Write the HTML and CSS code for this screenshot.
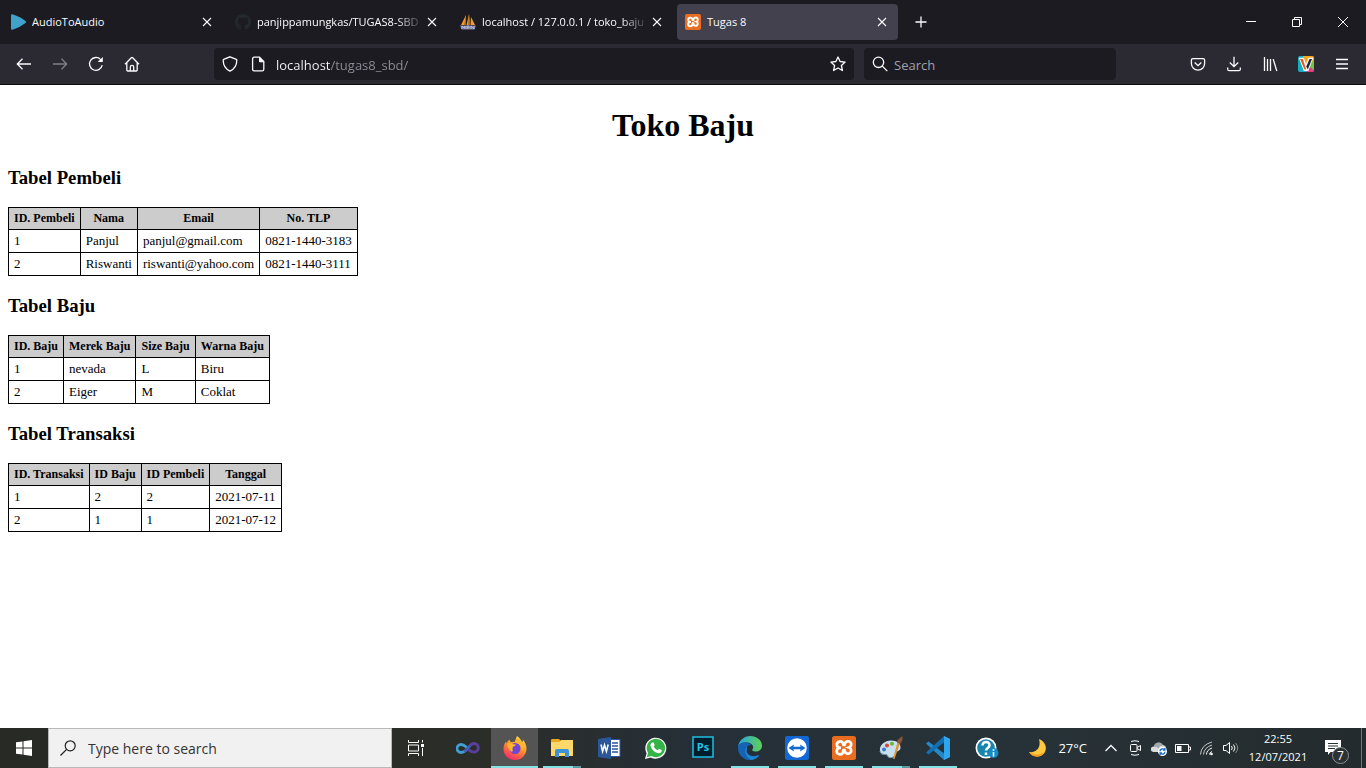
FILE: index.html
```html
<!DOCTYPE html>
<html lang="id">
<head>
<meta charset="utf-8">
<title>Tugas 8</title>
<link rel="stylesheet" href="styles.css">
</head>
<body class="screen">
<header class="browser">
  <div class="tabstrip">
    <div class="tab">
      <svg class="icon16" viewBox="0 0 16 16"><path d="M1 1.500Q1 0 2.500 .3C8 2 12 4.500 15.500 7Q16.500 8 15.500 9C12 11.500 8 14 2.500 15.700Q1 16 1 14.500Z" fill="#3ea2cb"/></svg>
      <span class="tab-title">AudioToAudio</span>
      <button class="tab-close" aria-label="Close tab"><svg class="icon10" viewBox="0 0 10 10"><path d="M1 1l8 8M9 1l-8 8" stroke="#fbfbfe" stroke-width="1.1"/></svg></button>
    </div>
    <div class="tab">
      <svg class="icon16" viewBox="0 0 16 16"><path fill="#24292e" d="M8 0C3.580 0 0 3.580 0 8c0 3.540 2.290 6.530 5.470 7.590.4.070.55-.17.55-.38v-1.490c-2.010.37-2.530-.49-2.690-.94-.09-.23-.48-.94-.82-1.130-.28-.15-.68-.52-.01-.53.63-.01 1.080.58 1.230.82.72 1.210 1.870.87 2.330.66.070-.52.28-.87.51-1.070-1.780-.2-3.640-.89-3.640-3.950 0-.87.310-1.590.82-2.150-.08-.2-.36-1.020.08-2.120 0 0 .67-.21 2.200.82a7.600 7.600 0 0 1 4 0c1.530-1.040 2.200-.82 2.200-.82.44 1.100.16 1.920.08 2.120.51.56.82 1.270.82 2.150 0 3.070-1.870 3.750-3.650 3.950.29.25.54.73.54 1.480v2.200c0 .21.15.46.55.38A8 8 0 0 0 8 0Z"/></svg>
      <span class="tab-title tab-title-long">panjippamungkas/TUGAS8-SBD</span>
      <button class="tab-close" aria-label="Close tab"><svg class="icon10" viewBox="0 0 10 10"><path d="M1 1l8 8M9 1l-8 8" stroke="#fbfbfe" stroke-width="1.1"/></svg></button>
    </div>
    <div class="tab">
      <svg class="icon16" viewBox="0 0 16 16"><path d="M6 1L1 11h4.500ZM9 0L6.500 11H10ZM11 3l-.5 8H15Z" fill="#f39a28"/><path d="M6 1L4 11h1.500ZM9 0L8 11h2Z" fill="#b96610"/><path d="M0 11.500h16l-1.500 4H1.500Z" fill="#77799b"/><path d="M2 15v-3l2 2 1-2v3M7 15v-3h2v2H7M11 15v-3l3 3v-3" stroke="#c9cadf" fill="none" stroke-width=".8"/></svg>
      <span class="tab-title tab-title-long">localhost / 127.0.0.1 / toko_baju</span>
      <button class="tab-close" aria-label="Close tab"><svg class="icon10" viewBox="0 0 10 10"><path d="M1 1l8 8M9 1l-8 8" stroke="#fbfbfe" stroke-width="1.1"/></svg></button>
    </div>
    <div class="tab tab-active">
      <svg class="icon16" viewBox="0 0 24 24"><rect width="24" height="24" rx="2.500" fill="#ea6c1f"/><path d="M9 11.900H8a3.200 3.200 0 1 1 3.100-4.200L11.500 9h1l.4-1.300A3.200 3.200 0 1 1 17 11.500a3.200 3.200 0 1 1-4.100 4L12.500 14h-1l-.4 1.500A3.200 3.200 0 1 1 8 11.900" fill="none" stroke="#fff" stroke-width="2.900"/></svg>
      <span class="tab-title">Tugas 8</span>
      <button class="tab-close" aria-label="Close tab"><svg class="icon10" viewBox="0 0 10 10"><path d="M1 1l8 8M9 1l-8 8" stroke="#fbfbfe" stroke-width="1.1"/></svg></button>
    </div>
    <button class="new-tab" aria-label="New tab"><svg class="icon16" viewBox="0 0 16 16"><path d="M8 2.500v11M2.500 8h11" stroke="#fbfbfe" stroke-width="1.300"/></svg></button>
    <div class="window-controls">
      <button class="window-button" aria-label="Minimize"><svg class="icon10" viewBox="0 0 10 10"><path d="M0 4.500h10" stroke="#fff"/></svg></button>
      <button class="window-button" aria-label="Restore"><svg class="icon10" viewBox="0 0 10 10"><path d="M.5 2.500h7v7h-7zM2.500 2.500v-2h7v7h-2" fill="none" stroke="#fff"/></svg></button>
      <button class="window-button" aria-label="Close"><svg class="icon10" viewBox="0 0 10 10"><path d="M0 0l10 10M10 0L0 10" stroke="#fff"/></svg></button>
    </div>
  </div>
  <nav class="toolbar">
    <button class="tool" aria-label="Back"><svg class="icon16" viewBox="0 0 16 16"><path d="M15 8H1.500M6.500 2.800L1.300 8l5.200 5.200" class="line"/></svg></button>
    <button class="tool tool-disabled" aria-label="Forward"><svg class="icon16" viewBox="0 0 16 16"><path d="M1 8h13.500M9.500 2.800L14.700 8l-5.200 5.200" class="line"/></svg></button>
    <button class="tool" aria-label="Reload"><svg class="icon16" viewBox="0 0 16 16"><path d="M14.200 9.200A6.400 6.400 0 1 1 12.700 3.600L13.700 4.600" class="line"/><path d="M14.800 1v4.600a.5.5 0 0 1-.5.5H9.700z" fill="#fbfbfe"/></svg></button>
    <button class="tool" aria-label="Home"><svg class="icon16" viewBox="0 0 16 16"><path d="M1 8.300L7.300 1.700q.7-.7 1.400 0L15 8.300M2.800 7v7q0 1 1 1h8.400q1 0 1-1V7M6.300 15v-4q0-1.700 1.700-1.700T9.700 11v4" class="line"/></svg></button>
    <div class="spacer"></div>
    <div class="field address">
      <svg class="icon16" viewBox="0 0 16 16"><path d="M8 .8l6.300 2.500q.5.200.5.800C14.800 9 12 13.400 8 15.200 4 13.400 1.200 9 1.200 4.100q0-.6.5-.8Z" class="line"/></svg>
      <svg class="icon16 page-icon" viewBox="0 0 16 16"><path d="M4.200 1.200h5.300l4.300 4.300v7.700q0 1.600-1.600 1.600h-8q-1.600 0-1.600-1.600V2.800q0-1.600 1.600-1.600Z" class="line"/><path d="M9 1v4.500q0 .8.8.8H14Z" fill="#fbfbfe"/></svg>
      <input class="field-input address-input" type="text" value="localhost/tugas8_sbd/" aria-label="Address">
      <button class="field-button" aria-label="Bookmark"><svg class="icon16" viewBox="0 0 16 16"><path d="M8 1l2.100 4.500 5 .6-3.700 3.400 1 5L8 12l-4.400 2.500 1-5L.9 6.100l5-.6Z" class="line" stroke-linejoin="round"/></svg></button>
    </div>
    <div class="field search">
      <svg class="icon16" viewBox="0 0 16 16"><circle cx="6.500" cy="6.300" r="5.200" class="line"/><path d="M10.300 10.100l5 5" class="line"/></svg>
      <input class="field-input" type="search" placeholder="Search" aria-label="Search">
    </div>
    <div class="spacer"></div>
    <button class="tool" aria-label="Pocket"><svg class="icon16" viewBox="0 0 16 16"><path d="M2.800 2.700h10.400q1.400 0 1.400 1.400V7.500a6.600 6.600 0 0 1-13.200 0V4.100q0-1.400 1.400-1.400ZM4.700 6.500L8 9.700l3.300-3.200" class="line"/></svg></button>
    <button class="tool" aria-label="Downloads"><svg class="icon16" viewBox="0 0 16 16"><path d="M8 .8v9.700M3.800 6.500L8 10.700l4.200-4.200M1.700 11.500v1.700q0 1.500 1.500 1.500h9.600q1.500 0 1.500-1.500v-1.700" class="line"/></svg></button>
    <button class="tool" aria-label="Library"><svg class="icon16" viewBox="0 0 16 16"><path d="M2.500 1v14M5.500 3v12M8.500 3v12M11.200 3.100L14.800 15" class="line"/></svg></button>
    <button class="tool" aria-label="Extension"><svg class="icon16" viewBox="0 0 16 16"><rect width="16" height="16" rx="2" fill="#14afc4"/><path d="M5 0h9q2 0 2 2v4L8 9Z" fill="#f8a51b"/><path d="M16 4v10L9 10Z" fill="#7bc242"/><path d="M8 16l4-5 4 4-1 1Z" fill="#e63b7a"/><path d="M.8 1.800h5L8 8l2.500-6.200h4.800L10.300 15H5.800Z" fill="#fff"/><path d="M2 3h2.800L8.200 13.500H6.500Z" fill="#e8561f"/><path d="M11.500 3H14L9.800 13.500 8.300 10.500Z" fill="#1d2440"/></svg></button>
    <button class="tool" aria-label="Menu"><svg class="icon16" viewBox="0 0 16 16"><path d="M2 3.500h12M2 8h12M2 12.500h12" class="line"/></svg></button>
  </nav>
</header>

<main class="page">
  <h1 class="page-title">Toko Baju</h1>

  <h3 class="section-title">Tabel Pembeli</h3>
  <table class="data">
    <thead><tr><th>ID. Pembeli</th><th>Nama</th><th>Email</th><th>No. TLP</th></tr></thead>
    <tbody>
      <tr><td>1</td><td>Panjul</td><td>panjul@gmail.com</td><td>0821-1440-3183</td></tr>
      <tr><td>2</td><td>Riswanti</td><td>riswanti@yahoo.com</td><td>0821-1440-3111</td></tr>
    </tbody>
  </table>

  <h3 class="section-title">Tabel Baju</h3>
  <table class="data">
    <thead><tr><th>ID. Baju</th><th>Merek Baju</th><th>Size Baju</th><th>Warna Baju</th></tr></thead>
    <tbody>
      <tr><td>1</td><td>nevada</td><td>L</td><td>Biru</td></tr>
      <tr><td>2</td><td>Eiger</td><td>M</td><td>Coklat</td></tr>
    </tbody>
  </table>

  <h3 class="section-title">Tabel Transaksi</h3>
  <table class="data">
    <thead><tr><th>ID. Transaksi</th><th>ID Baju</th><th>ID Pembeli</th><th>Tanggal</th></tr></thead>
    <tbody>
      <tr><td>1</td><td>2</td><td>2</td><td>2021-07-11</td></tr>
      <tr><td>2</td><td>1</td><td>1</td><td>2021-07-12</td></tr>
    </tbody>
  </table>
</main>

<footer class="taskbar">
  <button class="start" aria-label="Start"><svg class="icon16" viewBox="0 0 16 16"><path d="M0 2.300L6.500 1.400V7.500H0ZM7.500 1.200L16 0v7.500H7.500ZM0 8.500h6.500v6.100L0 13.700ZM7.500 8.500H16V16l-8.500-1.200Z" fill="#fff"/></svg></button>
  <label class="task-search">
    <svg class="icon16" viewBox="0 0 16 16"><circle cx="10.200" cy="5.800" r="5" fill="none" stroke="#222" stroke-width="1.200"/><path d="M6.600 9.400L.5 15.500" stroke="#222" stroke-width="1.300"/></svg>
    <input class="task-search-input" type="text" placeholder="Type here to search" aria-label="Type here to search">
  </label>
  <button class="task-view" aria-label="Task View"><svg class="icon16" viewBox="0 0 16 16"><path d="M.5 0v2.500h10V0M.5 5h10v6H.5zM.5 16v-2.500h10V16M14.500 0v2.500M14.500 8v8" fill="none" stroke="#fff"/><path d="M13 4h3v3h-3z" fill="#fff"/></svg></button>
  <div class="apps">
    <button class="app" aria-label="Visual Studio"><svg class="icon24" viewBox="0 0 24 24"><path d="M11 13.500C8.500 16 7 16.500 5 16.500a4 4 0 0 1 0-8c3 0 4.500 2 7 4" fill="none" stroke="#3f9fd0" stroke-width="2.800"/><path d="M9 14.800c3.500-1.300 4.500-7.300 9-7.300a4.300 4.300 0 0 1 0 8.600c-3 0-4.500-1.600-7-3.800" fill="none" stroke="#5a3f9c" stroke-width="2.800"/><path d="M8 15.600c2.500-1.200 3.500-3.600 6-6" fill="none" stroke="#3c62b0" stroke-width="2.600"/></svg></button>
    <button class="app app-current" aria-label="Firefox"><svg class="icon24" viewBox="0 0 24 24"><defs><linearGradient id="fx" x1=".8" y1="0" x2=".3" y2="1"><stop offset="0" stop-color="#ffe24a"/><stop offset=".45" stop-color="#ff9726"/><stop offset="1" stop-color="#f5286b"/></linearGradient></defs><path d="M14 0c3 2 4 4 5 6 1-.5 1-1.500.8-2.500C22 6 23.500 9 23.500 12.500A11.400 11.400 0 0 1 12 24C5.500 24 .5 19 .5 13c0-3.500 1-5.500 2.500-7.500l.5 2C4.500 5.500 5 4.500 6.500 3.500c0 1 .5 2 1.500 2.500l4-.3C12.500 3.500 13 2 14 0Z" fill="url(#fx)"/><circle cx="12" cy="12.500" r="5.500" fill="#7146d4"/><path d="M4 8c2-1.500 4-1 5.500-.2 1 .7 2 .7 3.500.7-.5 1.800-2 1.700-3 2.500-1.200 1 .5 3.500-1 5C6 14 4.500 12 4 8ZM12 6.500c5 0 8 4 6.500 8.500 2-1 3-5 1-8L14 2Z" fill="#ffb52f"/></svg></button>
    <button class="app app-open app-stacked" aria-label="File Explorer"><svg class="icon24" viewBox="0 0 24 24"><path d="M1 4q0-1 1-1h7l2 2h11q1 0 1 1v14H1Z" fill="#e9a820"/><path d="M11 4h12v4H8Z" fill="#ffd869"/><path d="M1 6h22v14H1Z" fill="#ffd869"/><path d="M5 21v-6q0-2 2-2h10q2 0 2 2v6h-4v-4H9v4Z" fill="#3b93d8"/></svg></button>
    <button class="app" aria-label="Word"><svg class="icon24" viewBox="0 0 24 24"><path d="M12 3.500h11v17H12Z" fill="#fff" stroke="#2b569a"/><path d="M15 7h6M15 10h6M15 13h6M15 16h6" stroke="#2b569a" stroke-width="1.300"/><path d="M1 3l13-2v22L1 21Z" fill="#2b579a"/><path d="M4 8.500l1.600 7L7.500 9l1.900 6.500 1.800-7" fill="none" stroke="#fff" stroke-width="1.500"/></svg></button>
    <button class="app" aria-label="WhatsApp"><svg class="icon24" viewBox="0 0 24 24"><path d="M1 23l1.600-5.800A10.500 10.500 0 1 1 6.800 21.400Z" fill="#fff"/><path d="M2.800 21.200L4 16.800a9.200 9.200 0 1 1 3.300 3.200Z" fill="#35b346"/><path d="M8.500 6.500l1.200.1 1 2.600-1 1.300c1 1.900 2 2.700 4 3.700l1.500-1.500 2.500 1.200c.3 3-2.500 3.600-4.300 3.100C10 16 7 12.500 6.500 9.700c-.2-1.500.8-3 2-3.200Z" fill="#fff"/></svg></button>
    <button class="app" aria-label="Photoshop"><svg class="icon24" viewBox="0 0 24 24"><rect x="2" y="1" width="20" height="20" fill="#001d2b" stroke="#1fb5d8" stroke-width="1.600"/><text x="12" y="15" class="ps-label">Ps</text></svg></button>
    <button class="app app-open" aria-label="Edge"><svg class="icon24" viewBox="0 0 24 24"><defs><linearGradient id="edge"><stop offset="0" stop-color="#24a7df"/><stop offset="1" stop-color="#62cf55"/></linearGradient></defs><path d="M0 11A12 12 0 0 1 12 0c7 0 12 4.500 12 9.500 0 4-3 6-6.500 6-2.700 0-3.500-1-3.300-1.700.3-.8 1-1.300 1-2.800C15 8.500 12 6.500 8 6.500 4 6.500 1 8 0 11Z" fill="url(#edge)"/><path d="M0 11.500C0 8 3 6.500 7 6.500c3 0 5 1 6.500 2.500C9 9 8 12 8.500 15c.7 4 5.500 6.500 11 4.300 1-.4 2 0 1.500.8A12 12 0 0 1 0 11.500Z" fill="#1463b4"/><path d="M9 10.500C6 13 6.500 20 13 23.900A12 12 0 0 0 21.500 19c-6 3-12 1-13-3.500Z" fill="#1c87d2"/></svg></button>
    <button class="app app-open" aria-label="TeamViewer"><svg class="icon24" viewBox="0 0 24 24"><rect width="24" height="24" rx="2" fill="#1269d3"/><circle cx="12" cy="12" r="9.800" fill="#fff"/><path d="M3.500 12L9 8.500l-.6 2.300h7.200L15 8.500l5.500 3.500L15 15.500l.6-2.300H8.400l.6 2.300Z" fill="#1269d3"/></svg></button>
    <button class="app app-open" aria-label="XAMPP"><svg class="icon24" viewBox="0 0 24 24"><rect width="24" height="24" rx="2.500" fill="#ea6c1f"/><path d="M9 11.900H8a3.200 3.200 0 1 1 3.100-4.200L11.500 9h1l.4-1.300A3.200 3.200 0 1 1 17 11.500a3.200 3.200 0 1 1-4.100 4L12.500 14h-1l-.4 1.500A3.200 3.200 0 1 1 8 11.900" fill="none" stroke="#fff" stroke-width="2.700"/></svg></button>
    <button class="app app-open app-stacked" aria-label="Paint"><svg class="icon24" viewBox="0 0 24 24"><path d="M1 15C0 9 6 4.500 12 4.500c6 0 10 3 9.500 7.500-.4 3-3 3-4.500 4-1.500 1.200 0 3-2 4.500-3 2-6 1-6.500-1-.4-2-2.500-1.500-4-1.500S1.300 16.500 1 15Z" fill="#c8dfed"/><path d="M1 15c.3 2 1.500 3.500 3.500 3.500s3.500-.5 4 1.500c.5 1.500 3.500 2.500 6.500.5" fill="none" stroke="#7ea3bd"/><circle cx="5" cy="13.500" r="2" fill="#347ac4"/><circle cx="8" cy="9.500" r="2" fill="#d8462e"/><circle cx="13" cy="7.800" r="2" fill="#65b83b"/><path d="M21 7L15.500 23l-1.500 0L18.500 6Z" fill="#e29331"/><path d="M18 6.500C18 3 21 2.500 23.500 0c.3 4-.5 6-2.500 8Z" fill="#8c5735"/></svg></button>
    <button class="app app-open" aria-label="Visual Studio Code"><svg class="icon24" viewBox="0 0 24 24"><path d="M18 0l6 3v18l-6 3L1 8.500l-1-1L2.500 5.500 18 17.500Z" fill="#2489ca"/><path d="M0 16.500L18 0v6.500L2.500 18.500Z" fill="#1070b3"/><path d="M18 0l6 3v18l-6 3Z" fill="#2fa5ec"/></svg></button>
    <button class="app app-wide" aria-label="Help"><svg class="icon24" viewBox="0 0 24 24"><circle cx="11" cy="12" r="10.500" fill="#fff"/><circle cx="11" cy="12" r="8.800" fill="#1785ab"/><path d="M7.500 9.500C7.500 4.500 15 5 14.500 9.500c-.3 2.500-3.500 2.500-3.500 5M11 16.500v2.500" fill="none" stroke="#fff" stroke-width="2.500"/><circle cx="18.500" cy="17" r="5" fill="#168bc9"/><path d="M18.500 16v4.500M18.500 13v2" stroke="#fff" stroke-width="1.500"/></svg></button>
  </div>
  <div class="tray">
    <button class="weather"><svg class="icon20" viewBox="0 0 20 20"><path d="M11 1C16 3 19 8 17.500 12.500 15 20 5.500 20.500 1 14 8 15 13.500 10 11 1Z" fill="#ffc83d"/><path d="M1 14c3 6 12 6.500 16-.5-4 4-10 4-16 .5Z" fill="#f19c24"/></svg><span>27°C</span></button>
    <button class="tray-icon" aria-label="Show hidden icons"><svg class="icon16" viewBox="0 0 16 16"><path d="M2.500 11L8 5.500 13.500 11" class="line"/></svg></button>
    <button class="tray-icon" aria-label="Meet Now"><svg class="icon16" viewBox="0 0 16 16"><path d="M4 1.500q4-1.500 8 0M4 14.500q4 1.500 8 0M4.500 4.500h4.500q1 0 1 1v5q0 1-1 1H4.500q-1 0-1-1v-5q0-1 1-1ZM10 7.500l3.500-2v5L10 8.500" fill="none" stroke="#fff"/></svg></button>
    <button class="tray-icon" aria-label="OneDrive"><svg class="icon16" viewBox="0 0 16 16"><path d="M2.500 12a2.800 2.800 0 0 1 .2-5.600L12 5q3 .6 3.300 4L9 12Z" fill="#d9dbdc"/><path d="M2.700 6.400A5 5 0 0 1 12 5q-3 0-4.500 3.500-2-2.200-4.800-2.100Z" fill="#a3a8aa"/><circle cx="11.500" cy="11.500" r="4.500" fill="#fff"/><path d="M9 11.300a2.600 2.600 0 0 1 4.500-1.600M14 11.700a2.600 2.600 0 0 1-4.500 1.600M13.900 8v2h-2M9.100 15v-2h2" fill="none" stroke="#1673ce" stroke-width="1.400"/></svg></button>
    <button class="tray-icon" aria-label="Battery"><svg class="icon16" viewBox="0 0 16 16"><path d="M.5 4.500h13v8H.5zM14 7h1.500v3H14" fill="none" stroke="#fff"/><path d="M2 6h4.500v5H2z" fill="#fff"/></svg></button>
    <button class="tray-icon" aria-label="Network"><svg class="icon16" viewBox="0 0 16 16"><g fill="none" stroke="#fff"><path d="M10.500 14.500q0-2 2.500-3M7.500 14.500q0-4.500 5.500-6.500" /><path d="M4.500 14.500Q5 7.500 13 5M1.500 14.500Q2 5 13 2" stroke="#c6c9ca"/></g><circle cx="12.500" cy="14" r="1.300" fill="#fff"/></svg></button>
    <button class="tray-icon" aria-label="Volume"><svg class="icon16" viewBox="0 0 16 16"><g fill="none" stroke="#fff"><path d="M.5 5.500H3l3.500-3v11l-3.500-3H.5zM8.500 6q1.500 2 0 4M10.500 4.500q3 3.500 0 7"/><path d="M12.500 3q4.500 5 0 10" stroke="#888c8d"/></g></svg></button>
    <button class="clock"><time>22:55</time><span>12/07/2021</span></button>
    <button class="notifications" aria-label="Notifications, 7 new"><svg class="icon16" viewBox="0 0 16 16"><path d="M0 0h16v12H5.500L3 15v-3H0Z" fill="#fff"/><path d="M3 3.500h10M3 6h10M3 8.500h7" stroke="#273032"/></svg><span class="badge">7</span></button>
    <span class="show-desktop"></span>
  </div>
</footer>
</body>
</html>
```

FILE: styles.css
```css
* { box-sizing: border-box; }

.screen {
  margin: 0;
  display: flex;
  flex-direction: column;
  min-height: 100vh;
  background: #fff;
  color: #000;
  font-family: "Liberation Serif", serif;
}

button {
  margin: 0;
  padding: 0;
  border: 0;
  background: none;
  color: inherit;
  font: inherit;
  display: flex;
  align-items: center;
  justify-content: center;
}

svg { display: block; flex: none; }
.icon10 { width: 10px; height: 10px; }
.icon16 { width: 16px; height: 16px; }
.icon20 { width: 20px; height: 20px; }
.icon24 { width: 24px; height: 24px; }
.line { fill: none; stroke: #fbfbfe; stroke-width: 1.3; }

/* Browser window */
.browser {
  border-bottom: 1px solid #0c0c0d;
  background: #2b2a33;
  color: #fbfbfe;
  font-family: "Open Sans", sans-serif;
}

.tabstrip {
  display: flex;
  align-items: center;
  gap: 4px;
  height: 44px;
  padding-left: 2px;
  background: #1c1b22;
  font-size: 11px;
  line-height: 18px;
}

.tab {
  flex: 0 1 221px;
  min-width: 0;
  display: flex;
  align-items: center;
  gap: 6px;
  height: 36px;
  padding: 0 8px;
  border-radius: 4px;
}
.tab-active { background: #42414d; }

.tab-title {
  flex: 1;
  min-width: 0;
  overflow: hidden;
  white-space: nowrap;
  margin-right: -6px;
}
.tab-title-long { mask-image: linear-gradient(to left, transparent, #000 28px); }
.tab-close { width: 16px; height: 24px; }
.new-tab { width: 38px; height: 36px; }

.window-controls { display: flex; margin-left: auto; align-self: stretch; }
.window-button { width: 46px; }

.toolbar {
  display: flex;
  align-items: center;
  height: 40px;
  padding: 0 6px;
}
.tool { flex: none; width: 36px; height: 32px; }
.tool-disabled { opacity: 0.4; }
.spacer { flex: 0 1 64px; }

.field {
  display: flex;
  align-items: center;
  min-width: 0;
  height: 32px;
  padding: 0 8px;
  border-radius: 4px;
  background: #1c1b22;
}
.address { flex: 1; margin-right: 10px; }
.search { flex: 0 1 252px; }
.page-icon { margin-left: 12px; }

.field-input {
  flex: 1;
  min-width: 0;
  margin-left: 6px;
  padding: 2px 0 0;
  border: 0;
  outline: 0;
  background: none;
  color: #fbfbfe;
  font: 13px/20px "Open Sans", sans-serif;
}
.field-input::placeholder { color: #a2a2ab; opacity: 1; }
/* host name bright, path dimmed */
.address-input {
  margin-left: 10px;
  color: transparent;
  background: linear-gradient(to right, #fbfbfe 54px, #8f8f98 54px);
  -webkit-background-clip: text;
  background-clip: text;
}

/* Page content */
.page { flex: 1; padding: 0 8px; }
.page-title {
  margin: 21px 0;
  line-height: 39px;
  text-align: center;
}
.section-title { margin: 18px 0; line-height: 23px; }

.data { border-collapse: collapse; font-size: 13px; }
.data th,
.data td {
  padding: 4px 5px;
  border: 1px solid #000;
  line-height: 14px;
  text-align: left;
}
.data th {
  background: #ccc;
  font-size: 12px;
  line-height: 13px;
  text-align: center;
}

/* Taskbar */
.taskbar {
  display: flex;
  height: 40px;
  background: linear-gradient(to right, #282a26, #2b2d29 36%, #262f37 50%, #273238 75%, #242b2d);
  color: #fff;
  font-family: "Open Sans", sans-serif;
}
.start { flex: none; width: 48px; }

.task-search {
  flex: 0 1 344px;
  min-width: 0;
  display: flex;
  align-items: center;
  gap: 12px;
  padding: 0 11px;
  border: 1px solid #b8b8b8;
  background: #f1f1f1;
}
.task-search-input {
  flex: 1;
  min-width: 0;
  padding: 2px 0 0;
  border: 0;
  outline: 0;
  background: none;
  font: 14px/20px "Open Sans", sans-serif;
}
.task-search-input::placeholder { color: #333; opacity: 1; }

.task-view { flex: none; width: 48px; }
.apps { display: flex; margin-left: 4px; }
.app {
  width: 47px;
  position: relative;
}
.app-wide { width: 52px; }
.app-current {
  background: #535453;
  box-shadow: inset 0 -2px #83e2e6;
}
.app-open::after {
  content: "";
  position: absolute;
  left: 5px;
  right: 4px;
  bottom: 0;
  height: 2px;
  background: #83e2e6;
}
.app-stacked::after {
  background: linear-gradient(to left, #5a9ba0 8px, #83e2e6 8px);
}
.ps-label {
  fill: #27c3ea;
  font: bold 11px "Open Sans", sans-serif;
  text-anchor: middle;
}

.tray { display: flex; margin-left: auto; }
.weather { gap: 10px; padding-right: 12px; font-size: 13px; }
.tray-icon { width: 24px; }
.clock {
  width: 70px;
  flex-direction: column;
  font-size: 11px;
  line-height: 18px;
}
.notifications { width: 48px; padding-right: 8px; position: relative; }
.badge {
  position: absolute;
  left: 19px;
  top: 19px;
  width: 17px;
  height: 17px;
  border: 1px solid #8b9091;
  border-radius: 50%;
  background: #2b3234;
  font-size: 12px;
  line-height: 15px;
  text-align: center;
}
.show-desktop { width: 5px; border-left: 1px solid #70767a; }
```
